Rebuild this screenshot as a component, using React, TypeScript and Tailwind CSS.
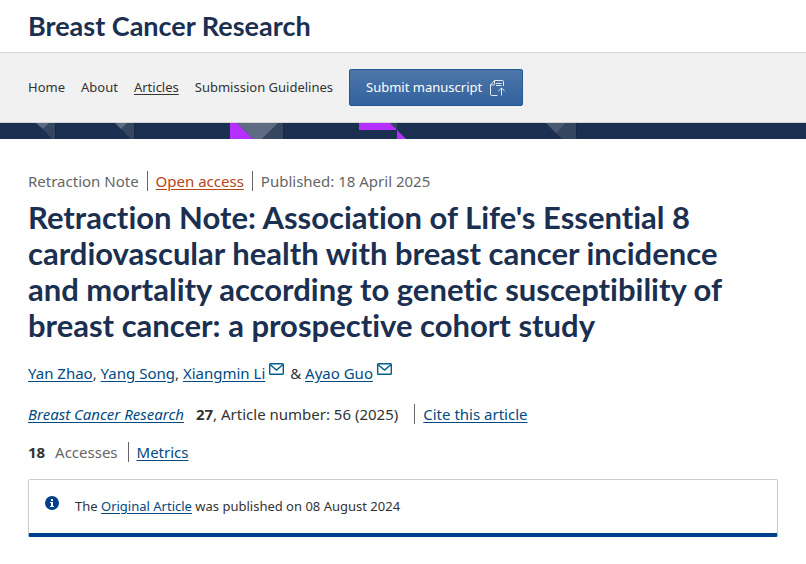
import React from 'react';

const linkClass = 'text-[#004b83] underline underline-offset-2';

const MailIcon = () => (
  <svg className="mr-0.5 ml-1 inline-block h-3 w-[15px] -translate-y-1 align-baseline" viewBox="0 0 15 12" fill="none" stroke="#025e8d" strokeWidth="1.4">
    <rect x="0.7" y="0.7" width="13.6" height="10.6" rx="0.8" />
    <path d="M1.2 1.8 7.5 7l6.3-5.2" />
  </svg>
);

const SubmitIcon = () => (
  <svg className="h-4 w-4" viewBox="0 0 16 16" fill="none" stroke="#fff" strokeOpacity="0.85" strokeWidth="1">
    <path d="M7.5 15.5h-6a1 1 0 0 1-1-1V5L4.5.5h8a1 1 0 0 1 1 1V6" />
    <path d="M.5 5h3.2a.8.8 0 0 0 .8-.8V.5M6 3.5h5.5M6 5.5h5.5" />
    <path d="M11.5 15.5V8.2M8.3 11.2l3.2-3.2 3.2 3.2" />
  </svg>
);

const InfoIcon = () => (
  <svg className="mt-4 h-3.5 w-3.5 shrink-0" viewBox="0 0 14 14" fill="#003f8d">
    <circle cx="7" cy="7" r="7" />
    <path fill="#fff" d="M6 3h2v2H6zM5 6h3v4h1v1H5v-1h1V7H5z" />
  </svg>
);

const Banner = () => (
  <div className="h-4 overflow-hidden bg-[#1b3051]">
    <svg className="block h-4 w-[806px] max-w-none" viewBox="0 0 806 16">
      <path fill="#354661" d="M49 0h6v16h-3l-9-10zM127 0h7v16h-3l-10-10zM278 0h5v16h-21zM390 0h7v7zM566 0h10v16h-14l-6-6z" />
      <path fill="#5f6b82" d="M36 0h13l-6 6zM115 0h12l-6 6zM237 0h41l-16 16h-9z" />
      <path fill="#4a5971" d="M546 0h20l-10 10z" />
      <path fill="#b52fff" d="M230 0h7l16 16h-23zM359 0h31l7 7h-38zM397 7l9 9h-9z" />
      <path fill="#172943" d="M55 0h1v16h-1zM134 0h1v16h-1zM283 0h1v16h-1zM576 0h1v16h-1z" />
    </svg>
  </div>
);

const App = () => {
  return (
    <div className="bg-white font-['Noto_Sans','Open_Sans',sans-serif] text-[15px] text-[#333]">
      <header>
        <div className="flex h-[53px] items-center border-b border-[#d5d5d5] px-7">
          <a href="#" className="font-['Lato',sans-serif] text-[27px] leading-8 font-bold text-[#1b3051] [font-variant-ligatures:none]">
            Breast Cancer Research
          </a>
        </div>

        <nav className="flex items-center gap-4 border-b border-[#d5d5d5] bg-[#f1f1f1] px-7 py-4 text-[13px]">
          <a href="#home">Home</a>
          <a href="#about">About</a>
          <a href="#articles" className="underline underline-offset-2">Articles</a>
          <a href="#guidelines">Submission Guidelines</a>
          <button
            type="button"
            className="flex h-[37px] items-center gap-2 rounded-xs border border-[#235995] bg-linear-to-b from-[#4d76a9] to-[#33629d] px-4 text-white"
          >
            Submit manuscript
            <SubmitIcon />
          </button>
        </nav>
        <Banner />
      </header>

      <main className="px-7 pt-8">
        <ul className="flex items-center text-[#666]">
          <li className="border-r border-[#666] pr-2 leading-5">Retraction Note</li>
          <li className="border-r border-[#666] px-2 leading-5">
            <a href="#open-access" className="text-[#b74616] underline underline-offset-2">Open access</a>
          </li>
          <li className="pl-2 leading-5">Published: 18 April 2025</li>
        </ul>

        <h1 className="mt-2 pr-5 font-['Lato',sans-serif] text-[31px] leading-9 font-bold text-[#1b3051] [font-variant-ligatures:none]">
          Retraction Note: Association of Life's Essential 8 cardiovascular health with breast cancer incidence and
          mortality according to genetic susceptibility of breast cancer: a prospective cohort study
        </h1>

        <p className="mt-[18px] leading-6">
          <a href="#yan-zhao" className={linkClass}>Yan Zhao</a>,{' '}
          <a href="#yang-song" className={linkClass}>Yang Song</a>,{' '}
          <a href="#xiangmin-li" className={linkClass}>Xiangmin Li<MailIcon /></a> &amp;{' '}
          <a href="#ayao-guo" className={linkClass}>Ayao Guo<MailIcon /></a>
        </p>

        <p className="mt-[17px] flex items-center leading-6">
          <a href="#journal" className={`${linkClass} italic`}>Breast Cancer Research</a>
          <span className="ml-3"><b>27</b>, Article number: 56 (2025)</span>
          <a href="#cite" className={`${linkClass} ml-4 border-l border-[#666] pl-2 leading-5`}>Cite this article</a>
        </p>

        <ul className="mt-4 flex items-center leading-5">
          <li className="border-r border-[#666] pr-2.5 text-[#666]">
            <b className="mr-1.5 text-[#333]">18</b> Accesses
          </li>
          <li className="pl-2">
            <a href="#metrics" className={linkClass}>Metrics</a>
          </li>
        </ul>

        <div className="mt-[17px] flex gap-4 rounded-xs border border-b-4 border-[#ccc] border-b-[#003f8d] px-4 text-[13px]">
          <InfoIcon />
          <p className="py-4 leading-[21px]">
            The <a href="#original" className={linkClass}>Original Article</a> was published on 08 August 2024
          </p>
        </div>
      </main>
    </div>
  );
};

export default App;
